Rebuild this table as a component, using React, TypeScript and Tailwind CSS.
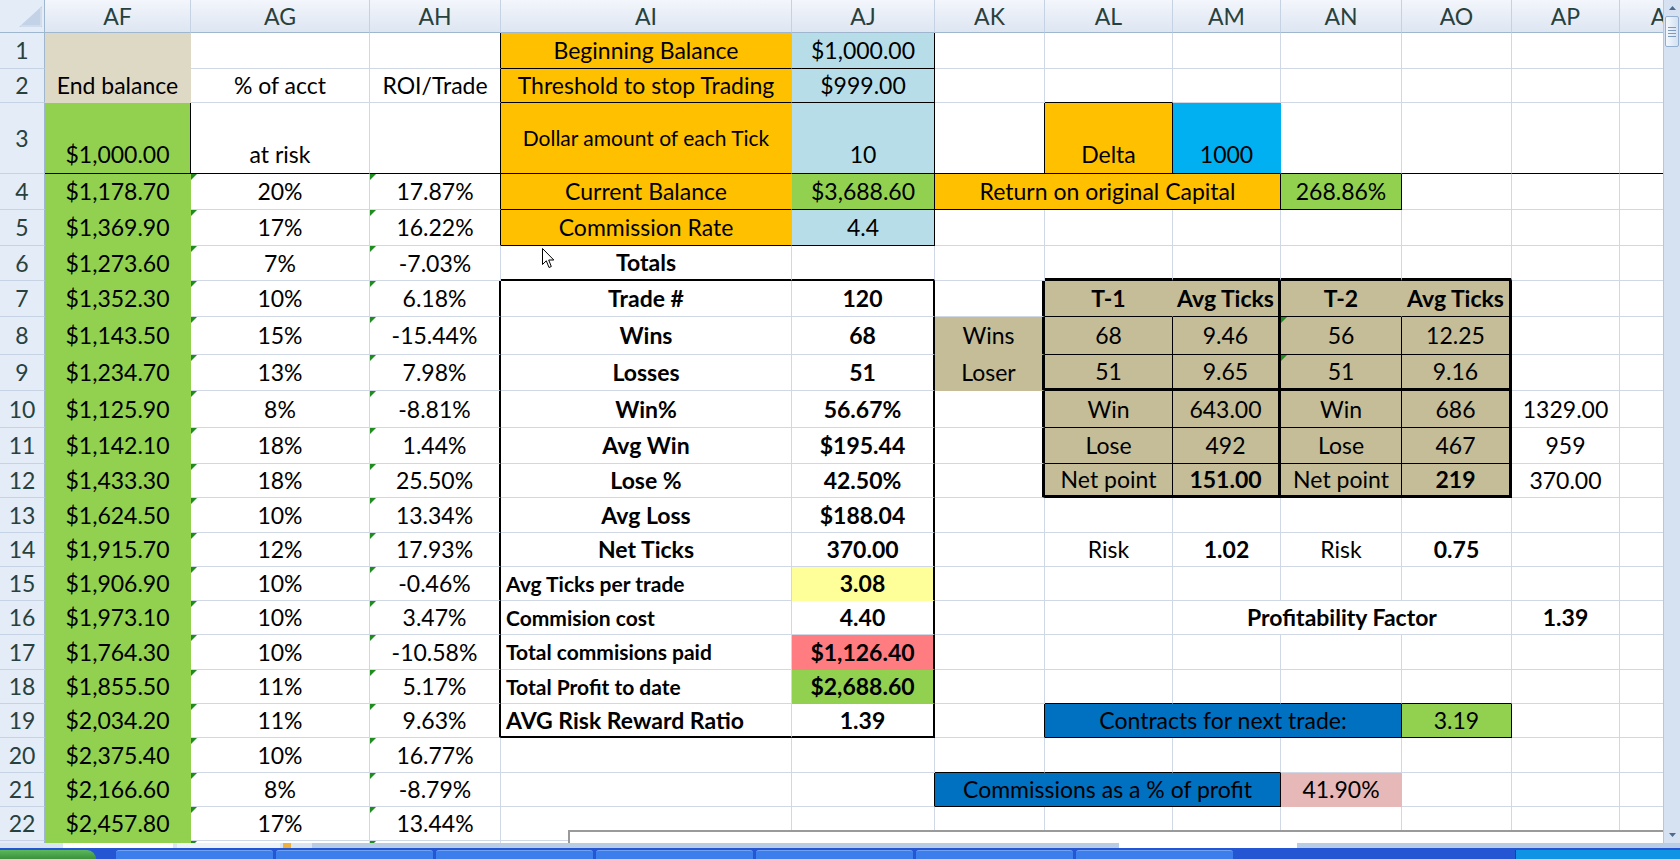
import React from "react";
import { twMerge } from "tailwind-merge";

// column widths (AQ is cut by the scroll bar)
const W: Record<string, string> = {
  AF: "w-[146px]",
  AG: "w-[179px]",
  AH: "w-[131px]",
  AI: "w-[291px]",
  AJ: "w-[143px]",
  AK: "w-[110px]",
  AL: "w-[128px]",
  AM: "w-[108px]",
  AN: "w-[121px]",
  AO: "w-[110px]",
  AP: "w-[108px]",
  AQ: "w-[96px]",
  AKAM: "w-[346px]",
  ALAN: "w-[357px]",
  AMAO: "w-[339px]",
};

const COLS = ["AF", "AG", "AH", "AI", "AJ", "AK", "AL", "AM", "AN", "AO", "AP", "AQ"];

// row heights, rows 1..23
const H = [
  "h-[36px]", "h-[34px]", "h-[71px]",
  "h-[36px]", "h-[36px]", "h-[35px]", "h-[36px]", "h-[38px]", "h-[36px]", "h-[37px]", "h-[36px]",
  "h-[34px]", "h-[35px]", "h-[34px]", "h-[34px]", "h-[34px]", "h-[35px]", "h-[34px]", "h-[34px]",
  "h-[35px]", "h-[34px]", "h-[34px]", "h-[34px]",
];

// fills also hide the grid lines of the cell
const OR = "bg-[#ffc000] border-r-[#ffc000] border-b-[#ffc000]";
const LB = "bg-[#b7dee8] border-r-[#b7dee8] border-b-[#b7dee8]";
const GR = "bg-[#92d050] border-r-[#92d050] border-b-[#92d050]";
const TAN = "bg-[#c4bd97] border-r-[#c4bd97] border-b-[#c4bd97]";
const TANL = "bg-[#ddd9c4] border-r-[#ddd9c4] border-b-[#ddd9c4]";
const CY = "bg-[#00b0f0] border-r-[#00b0f0] border-b-[#00b0f0]";
const BL = "bg-[#0070c0] border-r-[#0070c0] border-b-[#0070c0]";
const PK = "bg-[#e6b9b8] border-r-[#e6b9b8] border-b-[#e6b9b8]";
const SA = "bg-[#ff7c80] border-r-[#ff7c80] border-b-[#ff7c80]";
const YE = "bg-[#ffff99] border-r-[#ffff99] border-b-[#ffff99]";

const BB = "border-b-black";
const RB = "border-r-black";
const B2 = "border-b-2 border-b-black";
const R2 = "border-r-2 border-r-black";
const B3 = "border-b-[3px] border-b-black";
const R3 = "border-r-[3px] border-r-black";
const BOLD = "font-bold";
const LEFT = "justify-start pl-[5px]";
const SM = "text-[21px]";
const BOT = "items-end pb-[2px]";

const x = (...c: string[]) => c.join(" ");

type Spec = [string, string?, React.ReactNode?, boolean?];

function Cell({ w, c, tri, children }: { w: string; c?: string; tri?: boolean; children?: React.ReactNode }) {
  return (
    <div
      className={twMerge(
        "relative flex shrink-0 items-center justify-center whitespace-nowrap border-r border-b border-r-[#d0d7e5] border-b-[#d0d7e5]",
        W[w],
        c
      )}
    >
      {tri && (
        <span className="absolute left-0 top-0 h-0 w-0 border-t-[6px] border-r-[6px] border-t-[#1e8c1e] border-r-transparent" />
      )}
      {children}
    </div>
  );
}

function Row({ n, h, children }: { n: number; h: string; children: React.ReactNode }) {
  return (
    <div className={twMerge("flex shrink-0", h)}>
      <div className="flex w-[45px] shrink-0 items-center justify-center border-r border-b border-r-[#9eb6ce] border-b-[#c5d3e4] bg-[#e4ecf7] text-[#27413e]">
        {n < 23 ? n : null}
      </div>
      {children}
    </div>
  );
}

const hist: [string, string, string][] = [
  ["$1,178.70", "20%", "17.87%"],
  ["$1,369.90", "17%", "16.22%"],
  ["$1,273.60", "7%", "-7.03%"],
  ["$1,352.30", "10%", "6.18%"],
  ["$1,143.50", "15%", "-15.44%"],
  ["$1,234.70", "13%", "7.98%"],
  ["$1,125.90", "8%", "-8.81%"],
  ["$1,142.10", "18%", "1.44%"],
  ["$1,433.30", "18%", "25.50%"],
  ["$1,624.50", "10%", "13.34%"],
  ["$1,915.70", "12%", "17.93%"],
  ["$1,906.90", "10%", "-0.46%"],
  ["$1,973.10", "10%", "3.47%"],
  ["$1,764.30", "10%", "-10.58%"],
  ["$1,855.50", "11%", "5.17%"],
  ["$2,034.20", "11%", "9.63%"],
  ["$2,375.40", "10%", "16.77%"],
  ["$2,166.60", "8%", "-8.79%"],
  ["$2,457.80", "17%", "13.44%"],
];

const tail = (from: string[]): Spec[] => from.map((c) => [c] as Spec);

// cells from AI to AQ, per row
const right: Record<number, Spec[]> = {
  1: [
    ["AI", x(OR, BB), "Beginning Balance"],
    ["AJ", x(LB, BB, RB), "$1,000.00"],
    ...tail(["AK", "AL", "AM", "AN", "AO", "AP", "AQ"]),
  ],
  2: [
    ["AI", x(OR, BB), "Threshold to stop Trading"],
    ["AJ", x(LB, BB, RB), "$999.00"],
    ["AK"],
    ["AL", BB],
    ...tail(["AM", "AN", "AO", "AP", "AQ"]),
  ],
  3: [
    ["AI", x(OR, BB, SM), "Dollar amount of each Tick"],
    ["AJ", x(LB, BB, RB, BOT), "10"],
    ["AK", x(BB, RB)],
    ["AL", x(OR, BB, RB, BOT), "Delta"],
    ["AM", x(CY, BB, BOT), "1000"],
    ["AN", BB],
    ["AO", BB],
    ["AP", BB],
    ["AQ", BB],
  ],
  4: [
    ["AI", x(OR, BB), "Current Balance"],
    ["AJ", x(GR, BB, RB), "$3,688.60"],
    ["AKAM", x(OR, BB, RB), "Return on original Capital"],
    ["AN", x(GR, BB, RB), "268.86%"],
    ...tail(["AO", "AP", "AQ"]),
  ],
  5: [
    ["AI", x(OR, BB), "Commission Rate"],
    ["AJ", x(LB, BB, RB), "4.4"],
    ...tail(["AK", "AL", "AM", "AN", "AO", "AP", "AQ"]),
  ],
  6: [
    ["AI", x(B2, BOLD), "Totals"],
    ["AJ", B2],
    ["AK"],
    ["AL", B3],
    ["AM", B3],
    ["AN", B3],
    ["AO", B3],
    ["AP"],
    ["AQ"],
  ],
  7: [
    ["AI", BOLD, "Trade #"],
    ["AJ", x(R2, BOLD), "120"],
    ["AK", R3],
    ["AL", x(TAN, BB, BOLD), "T-1"],
    ["AM", x(TAN, R3, BB, BOLD), "Avg Ticks"],
    ["AN", x(TAN, BB, BOLD), "T-2"],
    ["AO", x(TAN, R3, BB, BOLD), "Avg Ticks"],
    ["AP"],
    ["AQ"],
  ],
  8: [
    ["AI", BOLD, "Wins"],
    ["AJ", x(R2, BOLD), "68"],
    ["AK", x(TAN, R3), "Wins"],
    ["AL", x(TAN, RB, BB), "68"],
    ["AM", x(TAN, R3, BB), "9.46"],
    ["AN", x(TAN, RB, BB), "56", true],
    ["AO", x(TAN, R3, BB), "12.25"],
    ["AP"],
    ["AQ"],
  ],
  9: [
    ["AI", BOLD, "Losses"],
    ["AJ", x(R2, BOLD), "51"],
    ["AK", x(TAN, R3), "Loser"],
    ["AL", x(TAN, RB, B3), "51"],
    ["AM", x(TAN, R3, B3), "9.65"],
    ["AN", x(TAN, RB, B3), "51", true],
    ["AO", x(TAN, R3, B3), "9.16"],
    ["AP"],
    ["AQ"],
  ],
  10: [
    ["AI", BOLD, "Win%"],
    ["AJ", x(R2, BOLD), "56.67%"],
    ["AK", R3],
    ["AL", x(TAN, RB, BB), "Win"],
    ["AM", x(TAN, R3, BB), "643.00"],
    ["AN", x(TAN, RB, BB), "Win"],
    ["AO", x(TAN, R3, BB), "686"],
    ["AP", "", "1329.00"],
    ["AQ"],
  ],
  11: [
    ["AI", BOLD, "Avg Win"],
    ["AJ", x(R2, BOLD), "$195.44"],
    ["AK", R3],
    ["AL", x(TAN, RB, BB), "Lose"],
    ["AM", x(TAN, R3, BB), "492"],
    ["AN", x(TAN, RB, BB), "Lose"],
    ["AO", x(TAN, R3, BB), "467"],
    ["AP", "", "959"],
    ["AQ"],
  ],
  12: [
    ["AI", BOLD, "Lose %"],
    ["AJ", x(R2, BOLD), "42.50%"],
    ["AK", R3],
    ["AL", x(TAN, RB, B3), "Net point"],
    ["AM", x(TAN, R3, B3, BOLD), "151.00"],
    ["AN", x(TAN, RB, B3), "Net point"],
    ["AO", x(TAN, R3, B3, BOLD), "219"],
    ["AP", "", "370.00"],
    ["AQ"],
  ],
  13: [
    ["AI", BOLD, "Avg Loss"],
    ["AJ", x(R2, BOLD), "$188.04"],
    ...tail(["AK", "AL", "AM", "AN", "AO", "AP", "AQ"]),
  ],
  14: [
    ["AI", BOLD, "Net Ticks"],
    ["AJ", x(R2, BOLD), "370.00"],
    ["AK"],
    ["AL", "", "Risk"],
    ["AM", BOLD, "1.02"],
    ["AN", "", "Risk"],
    ["AO", BOLD, "0.75"],
    ["AP"],
    ["AQ"],
  ],
  15: [
    ["AI", x(BOLD, LEFT, SM), "Avg Ticks per trade"],
    ["AJ", x(YE, R2, BOLD), "3.08"],
    ...tail(["AK", "AL", "AM", "AN", "AO", "AP", "AQ"]),
  ],
  16: [
    ["AI", x(BOLD, LEFT, SM), "Commision cost"],
    ["AJ", x(R2, BOLD), "4.40"],
    ["AK"],
    ["AL"],
    ["AMAO", BOLD, "Profitability Factor"],
    ["AP", BOLD, "1.39"],
    ["AQ"],
  ],
  17: [
    ["AI", x(BOLD, LEFT, SM), "Total commisions paid"],
    ["AJ", x(SA, R2, BOLD), "$1,126.40"],
    ...tail(["AK", "AL", "AM", "AN", "AO", "AP", "AQ"]),
  ],
  18: [
    ["AI", x(BOLD, LEFT, SM), "Total Profit to date"],
    ["AJ", x(GR, R2, BOLD), "$2,688.60"],
    ["AK"],
    ["AL", BB],
    ["AM", BB],
    ["AN", BB],
    ["AO", BB],
    ["AP"],
    ["AQ"],
  ],
  19: [
    ["AI", x(BOLD, LEFT, B2), "AVG Risk Reward Ratio"],
    ["AJ", x(R2, B2, BOLD), "1.39"],
    ["AK", RB],
    ["ALAN", x(BL, RB, BB), "Contracts for next trade:"],
    ["AO", x(GR, RB, BB), "3.19"],
    ["AP"],
    ["AQ"],
  ],
  20: [
    ["AI"],
    ["AJ"],
    ["AK", BB],
    ["AL", BB],
    ["AM", BB],
    ...tail(["AN", "AO", "AP", "AQ"]),
  ],
  21: [
    ["AI"],
    ["AJ", RB],
    ["AKAM", x(BL, RB, BB), "Commissions as a % of profit"],
    ["AN", PK, "41.90%"],
    ...tail(["AO", "AP", "AQ"]),
  ],
  22: tail(["AI", "AJ", "AK", "AL", "AM", "AN", "AO", "AP", "AQ"]),
  23: tail(["AI", "AJ", "AK", "AL", "AM", "AN", "AO", "AP", "AQ"]),
};

function ahRight(r: number) {
  if (r <= 5) return RB;
  if (r >= 7 && r <= 19) return R2;
  return "";
}

function LeftCells({ r }: { r: number }) {
  if (r === 1)
    return (
      <>
        <Cell w="AF" c={TANL} />
        <Cell w="AG" />
        <Cell w="AH" c={RB} />
      </>
    );
  if (r === 2)
    return (
      <>
        <Cell w="AF" c={TANL}>End balance</Cell>
        <Cell w="AG">% of acct</Cell>
        <Cell w="AH" c={RB}>ROI/Trade</Cell>
      </>
    );
  if (r === 3)
    return (
      <>
        <Cell w="AF" c={x(GR, BB, RB, BOT)}>$1,000.00</Cell>
        <Cell w="AG" c={x(BB, BOT)}>at risk</Cell>
        <Cell w="AH" c={x(BB, RB)} />
      </>
    );
  const d = hist[r - 4] ?? ["", "", ""];
  return (
    <>
      <Cell w="AF" c={GR}>{d[0]}</Cell>
      <Cell w="AG" tri>{d[1]}</Cell>
      <Cell w="AH" c={ahRight(r)} tri>{d[2]}</Cell>
    </>
  );
}

function Corner() {
  return (
    <div className="flex w-[45px] shrink-0 items-end justify-end border-r border-b border-r-[#9eb6ce] border-b-[#9eb6ce] bg-[#e4ecf7] pr-[2px] pb-[5px]">
      <svg width="23" height="21" viewBox="0 0 23 21">
        <path d="M23 0 V21 H0 Z" fill="#c3d2e6" />
        <path d="M22 2 V20 H2" fill="none" stroke="#dde7f3" strokeWidth="1" />
      </svg>
    </div>
  );
}

function VScroll() {
  return (
    <div className="flex w-[17px] shrink-0 flex-col border-l border-l-[#b6c7dc] bg-[#d6e2f1]">
      <div className="flex h-[16px] items-center justify-center">
        <svg width="7" height="4" viewBox="0 0 7 4">
          <path d="M0 4 L3.5 0 L7 4 Z" fill="#4d6a8f" />
        </svg>
      </div>
      <div className="mx-[1px] flex h-[31px] flex-col items-center justify-center gap-[2px] rounded-[2px] border border-[#94aed0] bg-linear-to-r from-[#f4f8fc] to-[#d3e1f2]">
        <span className="h-px w-[8px] bg-[#7f9aba]" />
        <span className="h-px w-[8px] bg-[#7f9aba]" />
        <span className="h-px w-[8px] bg-[#7f9aba]" />
        <span className="h-px w-[8px] bg-[#7f9aba]" />
      </div>
      <div className="flex-1" />
      <div className="flex h-[16px] items-center justify-center">
        <svg width="7" height="4" viewBox="0 0 7 4">
          <path d="M0 0 L3.5 4 L7 0 Z" fill="#4d6a8f" />
        </svg>
      </div>
    </div>
  );
}

function Taskbar() {
  const buttons = [0, 1, 2, 3, 4, 5, 6];
  return (
    <div className="flex h-[11px] shrink-0 bg-[#2456d4] pt-[2px]">
      <div className="w-[96px] rounded-tr-[9px] bg-linear-to-b from-[#5cb85c] to-[#3a923a]" />
      <div className="ml-[20px] flex gap-[3px]">
        {buttons.map((b) => (
          <div key={b} className="w-[157px] rounded-t-[3px] border-t border-[#6fa2f5] bg-[#3c7eec]" />
        ))}
      </div>
      <div className="flex-1" />
      <div className="w-[165px] border-l border-[#1b3f9a] bg-[#0f93e4]" />
    </div>
  );
}

function TabStrip() {
  return (
    <div className="flex h-[5px] shrink-0 bg-[#b9cce5]">
      <div className="flex w-[312px] bg-[#dbe5f2]">
        <div className="w-[63px]" />
        <div className="w-[110px] bg-white" />
        <div className="ml-[4px] w-[103px] bg-[#eef3fa]" />
        <div className="ml-[3px] w-[8px] bg-[#f0b040]" />
      </div>
      <div className="ml-[807px] w-[178px] bg-white" />
    </div>
  );
}

export default function App() {
  const rows = Array.from({ length: 23 }, (_, i) => i + 1);
  return (
    <div className="flex h-[859px] w-[1680px] flex-col overflow-hidden bg-white font-['Lato',sans-serif] text-[23px] text-black">
      <div className="flex h-[843px] shrink-0">
        <div className="relative w-[1663px] shrink-0 overflow-hidden">
          {/* column headers */}
          <div className="flex h-[33px]">
            <Corner />
            {COLS.map((c) => (
              <div
                key={c}
                className={twMerge(
                  "flex shrink-0 items-center justify-center border-r border-b border-r-[#c5d2e3] border-b-[#9eb6ce] bg-linear-to-b from-[#f3f6fb] to-[#dde6f2] text-[#27413e]",
                  W[c]
                )}
              >
                {c}
              </div>
            ))}
          </div>

          {rows.map((r) => (
            <Row key={r} n={r} h={H[r - 1]}>
              <LeftCells r={r} />
              {right[r].map(([w, c, t, tri], i) => (
                <Cell key={i} w={w} c={c} tri={tri}>
                  {t}
                </Cell>
              ))}
            </Row>
          ))}

          {/* horizontal scroll area edge lying over the last row */}
          <div className="absolute left-[568px] top-[830px] h-[14px] w-[1100px] border-t-2 border-l-2 border-[#9a9a9a] bg-white" />

          {/* mouse pointer */}
          <svg className="absolute left-[542px] top-[248px]" width="13" height="21" viewBox="0 0 13 21">
            <path
              d="M0.5 0.5 V16.5 L4.3 12.8 L7 19.5 L9.3 18.5 L6.7 12 H11.8 Z"
              fill="white"
              stroke="black"
              strokeWidth="1"
              strokeLinejoin="miter"
            />
          </svg>
        </div>
        <VScroll />
      </div>
      <TabStrip />
      <Taskbar />
    </div>
  );
}
